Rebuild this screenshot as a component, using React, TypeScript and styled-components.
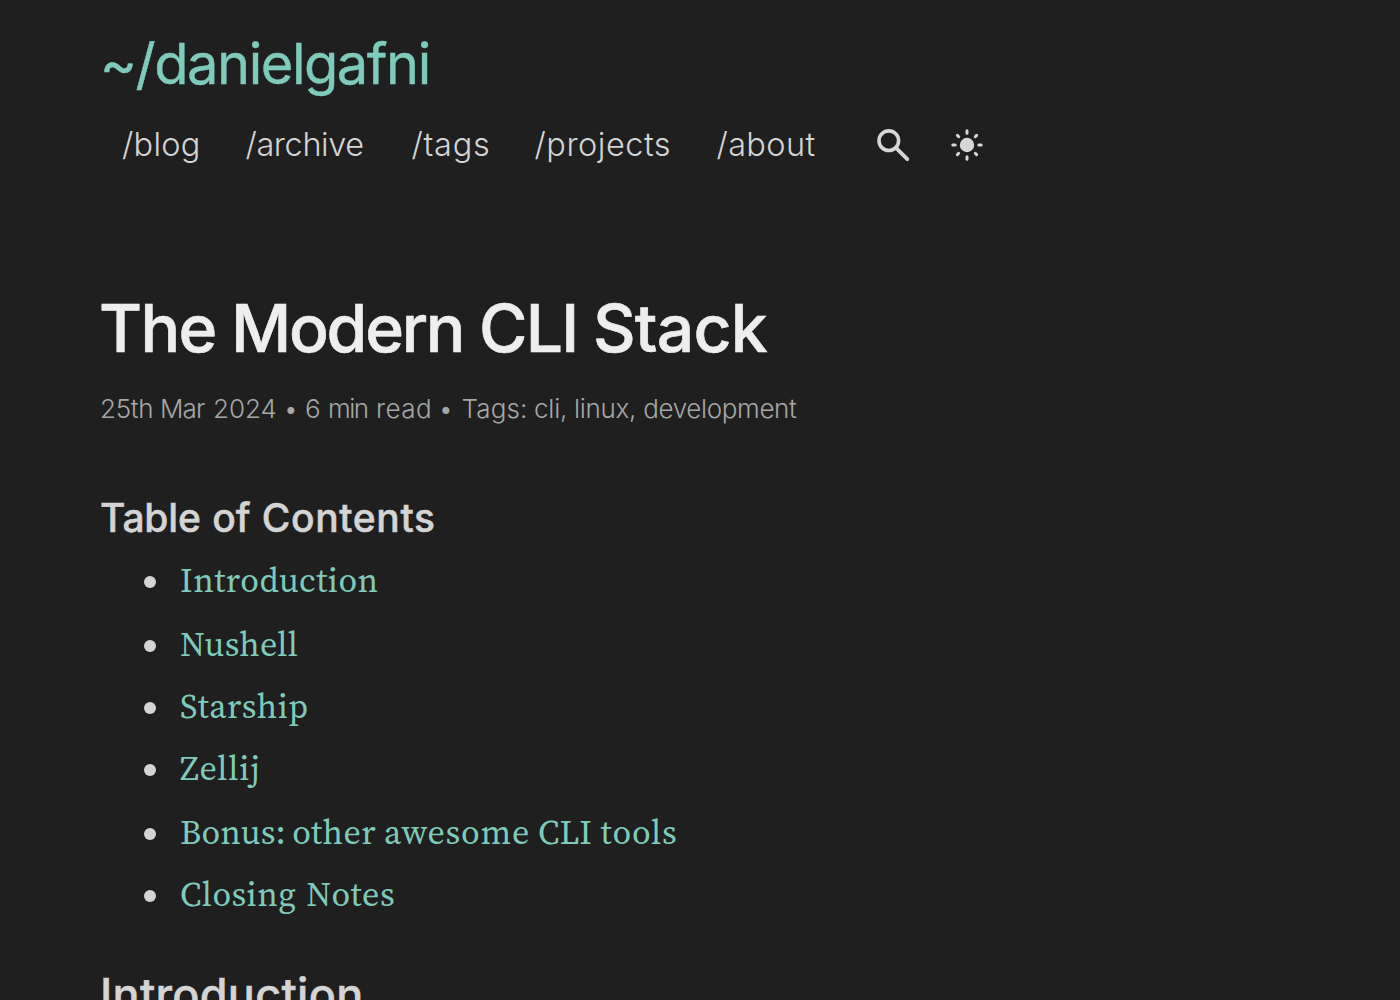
import React from "react";
import styled, { createGlobalStyle } from "styled-components";

const Global = createGlobalStyle`
  body { margin: 0; background: #1f1f1f; color: #d4d4d4; }
`;

const Page = styled.div`
  box-sizing: border-box;
  height: 1000px;
  overflow: hidden;
  padding: 32px 100px 0;
  background: #1f1f1f;
  font-family: Inter, sans-serif;
`;

const Brand = styled.a`
  display: block;
  height: 64px;
  line-height: 64px;
  font-size: 56px;
  font-weight: 400;
  letter-spacing: -1.48px;
  color: #7fcbbb;
  -webkit-text-stroke: 0.4px #7fcbbb;
`;

const Nav = styled.nav`
  display: flex;
  align-items: center;
  height: 50px;
  margin-top: 23px;
  padding-left: 22px;
  font-size: 32.5px;
  font-weight: 300;
`;

const Word = styled.span<{ $w?: number; $ls: number }>`
  flex: none;
  width: ${(p) => (p.$w ? `${p.$w}px` : "auto")};
  letter-spacing: ${(p) => p.$ls}px;
  white-space: pre;
`;

const NavLink = styled(Word)`
  line-height: 48px;
  padding-top: 2px;
`;

const IconButton = styled.a<{ $after?: number }>`
  display: flex;
  margin-right: ${(p) => p.$after ?? 0}px;
`;

const Title = styled.h1`
  display: flex;
  margin: 119px 0 0 -1px;
  height: 80px;
  line-height: 80px;
  font-size: 66px;
  font-weight: 500;
  color: #eeeeee;
  -webkit-text-stroke: 0.6px #eeeeee;
`;

const Meta = styled.p`
  display: flex;
  margin: 21px 0 0;
  height: 40px;
  line-height: 40px;
  font-size: 26px;
  font-weight: 300;
  color: #a7a7a7;
`;

const TocHeading = styled.h2`
  display: flex;
  margin: 64px 0 0;
  height: 50px;
  line-height: 50px;
  font-size: 39px;
  font-weight: 500;
  -webkit-text-stroke: 0.5px #d4d4d4;
`;

const Toc = styled.ul`
  margin: 6px 0 0;
  padding: 0;
  list-style: none;
  font-family: "Source Serif 4", "Source Serif Pro", serif;
  font-size: 34px;
`;

const TocItem = styled.li`
  display: flex;
  align-items: center;
  height: 62px;
  padding-left: 44px;

  &:nth-child(3n + 2) {
    margin-top: 2px;
  }

  &::before {
    content: "";
    width: 12px;
    height: 12px;
    margin: 4px 24px 0 0;
    border-radius: 50%;
    background: #d4d4d4;
  }
`;

const TocLink = styled.a`
  display: flex;
  line-height: 62px;
  color: #7fcbbb;
`;

const SectionHeading = styled.h2`
  margin: 45px 0 0;
  height: 50px;
  line-height: 50px;
  font-size: 45px;
  font-weight: 500;
  letter-spacing: 0.28px;
  -webkit-text-stroke: 0.5px #d4d4d4;
`;

type W = [text: string, letterSpacing: number, width?: number];

const nav: W[] = [
  ["/blog", 0.25, 123.5],
  ["/archive", -0.4, 166],
  ["/tags", 0.7, 123],
  ["/projects", 0.5, 182],
  ["/about", 0.35, 153.5],
];

const title: W[] = [
  ["The ", -1.7, 132],
  ["Modern ", -2.24, 248],
  ["CLI ", -1.7, 114],
  ["Stack", -0.8],
];

const meta: W[] = [
  ["25th ", -0.27, 60],
  ["Mar ", -0.85, 53],
  ["2024 ", 0, 70.5],
  ["• ", 0, 21.5],
  ["6 ", 0, 23],
  ["min ", -1.5, 48],
  ["read", 0.5, 62.5],
  ["• ", 0, 23],
  ["Tags: ", 0.15, 72.5],
  ["cli, ", -0.2, 40],
  ["linux, ", -0.3, 69.3],
  ["development", -0.37],
];

const tocTitle: W[] = [
  ["Table ", -0.2, 112.3],
  ["of ", 0, 49.4],
  ["Contents", 0.65],
];

const toc: W[][] = [
  [["Introduction", 0.54]],
  [["Nushell", 0.28]],
  [["Starship", 0.62]],
  [["Zellij", 0.8]],
  [
    ["Bonus: ", 0.1, 112.3],
    ["other ", 0.45, 91.7],
    ["awesome ", 0.78, 154],
    ["CLI ", 0.1, 62.5],
    ["tools", 0.85],
  ],
  [
    ["Closing ", 0.4, 126.3],
    ["Notes", 0.6],
  ],
];

const Words = ({ items }: { items: W[] }) => (
  <>
    {items.map(([text, ls, w], i) => (
      <Word key={i} $ls={ls} $w={w}>
        {text}
      </Word>
    ))}
  </>
);

const SearchIcon = () => (
  <svg width="44" height="44" viewBox="0 0 44 44" fill="none" stroke="#d6d6d6">
    <circle cx="18.8" cy="18.7" r="9.8" strokeWidth="3.6" />
    <path d="M26 25.9 37.3 37.2" strokeWidth="3.8" strokeLinecap="round" />
  </svg>
);

const SunIcon = () => (
  <svg width="44" height="44" viewBox="0 0 44 44" fill="none" stroke="#d6d6d6" strokeWidth="3" strokeLinecap="round">
    <circle cx="23" cy="23" r="7.2" fill="#d6d6d6" stroke="none" />
    <path d="M23 8.8v2.4M23 34.8v2.4M8.8 23h2.4M34.8 23h2.4M13.4 13.4l1.3 1.3M31.3 31.3l1.3 1.3M13.4 32.6l1.3-1.3M31.3 14.7l1.3-1.3" />
  </svg>
);

export default function App() {
  return (
    <Page>
      <Global />
      <Brand>~/danielgafni</Brand>
      <Nav>
        {nav.map(([text, ls, w]) => (
          <NavLink as="a" key={text} $ls={ls} $w={w}>
            {text}
          </NavLink>
        ))}
        <IconButton $after={30}>
          <SearchIcon />
        </IconButton>
        <IconButton>
          <SunIcon />
        </IconButton>
      </Nav>
      <Title>
        <Words items={title} />
      </Title>
      <Meta>
        <Words items={meta} />
      </Meta>
      <TocHeading>
        <Words items={tocTitle} />
      </TocHeading>
      <Toc>
        {toc.map((item, i) => (
          <TocItem key={i}>
            <TocLink>
              <Words items={item} />
            </TocLink>
          </TocItem>
        ))}
      </Toc>
      <SectionHeading>Introduction</SectionHeading>
    </Page>
  );
}
